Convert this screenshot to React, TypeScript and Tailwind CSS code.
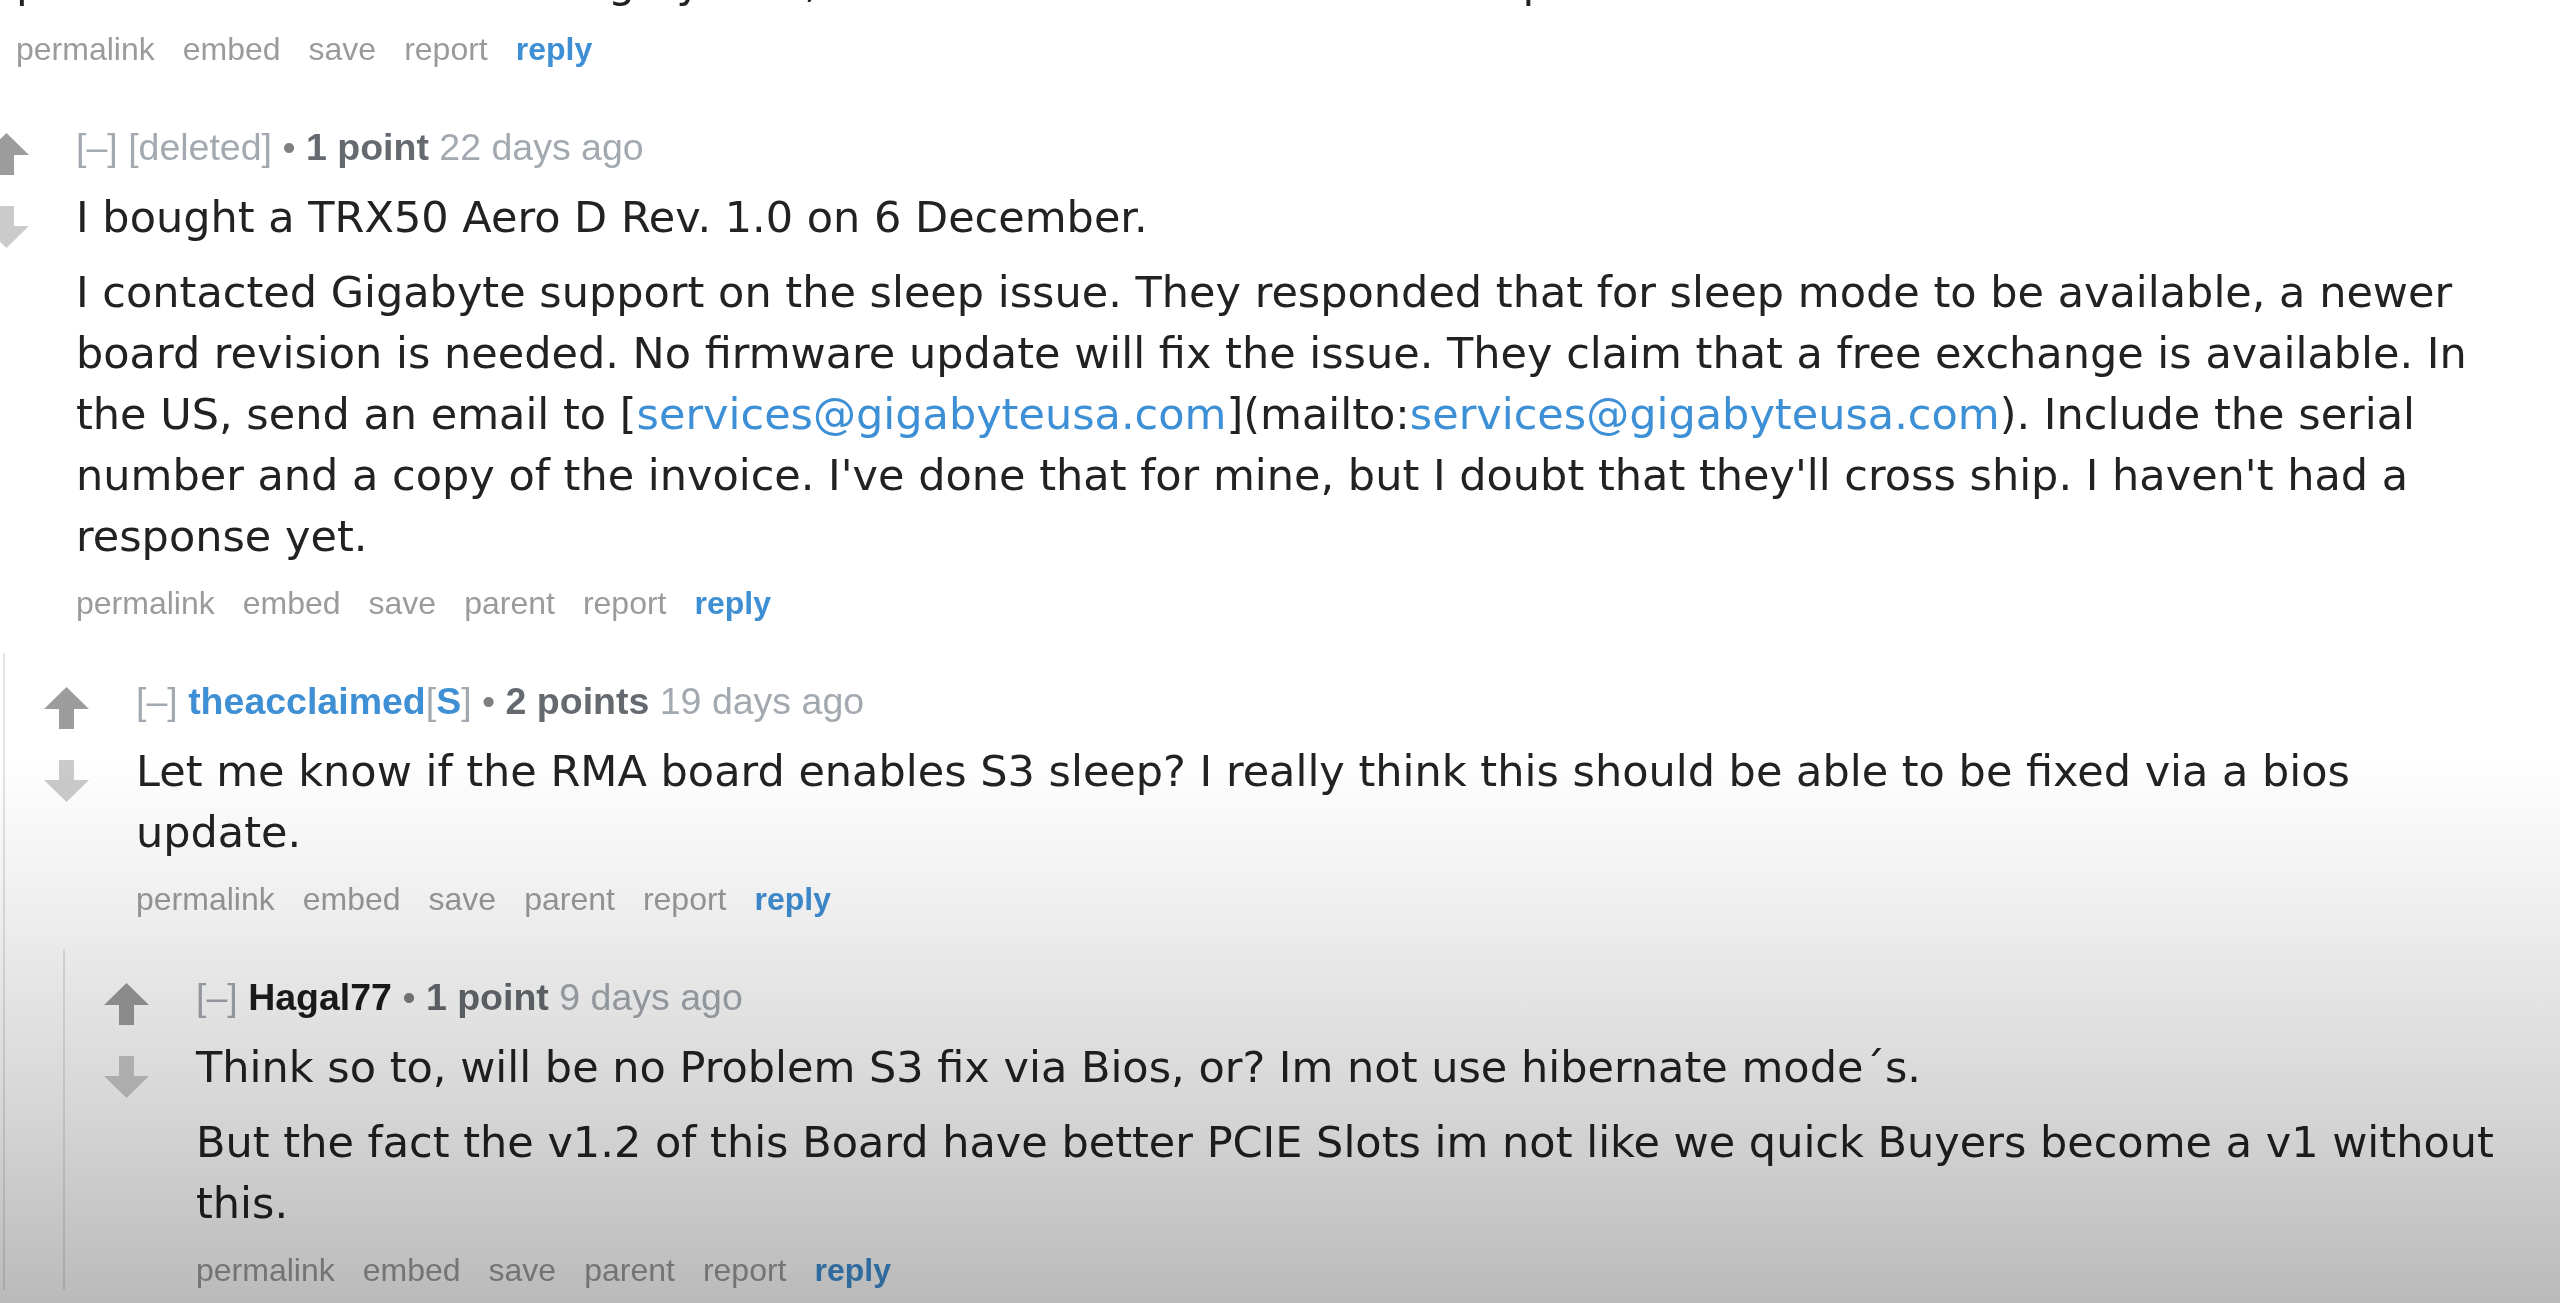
import React from "react";

type Para = React.ReactNode;

interface CommentData {
  author: React.ReactNode;
  points: string;
  age: string;
  body: Para[];
  parent?: boolean;
}

const metaFont = "font-['Liberation_Sans',Arial,sans-serif]";
const bodyFont = "font-['DejaVu_Sans','Verdana',sans-serif] text-[43px] leading-[61px] text-[#222]";

const Arrow = ({ down }: { down?: boolean }) => (
  <svg width="45" height="42" viewBox="0 0 45 42" className={down ? "rotate-180" : ""}>
    <path d="M22.5 0 L45 22 L30 22 L30 42 L15 42 L15 22 L0 22 Z" fill={down ? "#cbcbcb" : "#9c9c9c"} />
  </svg>
);

const Mail = ({ children }: { children: string }) => <span className="text-[#3d8fd6]">{children}</span>;

const Footer = ({ parent }: { parent?: boolean }) => (
  <ul className={`${metaFont} flex gap-[28px] text-[32px] leading-[40px] text-[#9b9b9b]`}>
    <li>permalink</li>
    <li>embed</li>
    <li>save</li>
    {parent && <li>parent</li>}
    <li>report</li>
    <li className="font-bold text-[#3f8fd4]">reply</li>
  </ul>
);

const Header = ({ c }: { c: CommentData }) => (
  <div className={`${metaFont} flex items-baseline whitespace-pre text-[37.5px] leading-[40px] text-[#a3a9b0]`}>
    <span>[–] </span>
    {c.author}
    <span className="text-[#7f7f7f]"> • </span>
    <span className="font-bold text-[#656a70]">{c.points}</span>
    <span> {c.age}</span>
  </div>
);

// each nesting level: 2px rule + 36px pad, so child row starts 60px right of parent row
const Children = ({ children }: { children: React.ReactNode }) => (
  <div className="mt-[30px] ml-[22px] border-l-2 border-[#e4e4e4] pl-[36px] pt-[28px]">{children}</div>
);

function Comment({ c, children }: { c: CommentData; children?: React.ReactNode }) {
  return (
    <div>
      <div className="flex">
        <div className="flex w-[50px] shrink-0 flex-col items-center gap-[31px] pt-[6px]">
          <Arrow />
          <Arrow down />
        </div>
        <div className="ml-[45px] min-w-0 flex-1 pr-[42px]">
          <Header c={c} />
          <div className={`${bodyFont} mt-[20px] flex flex-col gap-[14px]`}>
            {c.body.map((p, i) => (
              <p key={i}>{p}</p>
            ))}
          </div>
          <div className="mt-[16px]">
            <Footer parent={c.parent} />
          </div>
        </div>
      </div>
      {children && <Children>{children}</Children>}
    </div>
  );
}

const deleted: CommentData = {
  author: <span>[deleted]</span>,
  points: "1 point",
  age: "22 days ago",
  parent: true,
  body: [
    "I bought a TRX50 Aero D Rev. 1.0 on 6 December.",
    <>
      I contacted Gigabyte support on the sleep issue. They responded that for sleep mode to be available, a newer
      board revision is needed. No firmware update will fix the issue. They claim that a free exchange is available.
      In the US, send an email to [<Mail>services@gigabyteusa.com</Mail>](mailto:<Mail>services@gigabyteusa.com</Mail>).
      Include the serial number and a copy of the invoice. I've done that for mine, but I doubt that they'll cross
      ship. I haven't had a response yet.
    </>,
  ],
};

const op: CommentData = {
  author: (
    <span>
      <span className="font-bold text-[#3f8fd4]">theacclaimed</span>
      <span>[</span>
      <span className="font-bold text-[#3f8fd4]">S</span>
      <span>]</span>
    </span>
  ),
  points: "2 points",
  age: "19 days ago",
  parent: true,
  body: ["Let me know if the RMA board enables S3 sleep? I really think this should be able to be fixed via a bios update."],
};

const hagal: CommentData = {
  author: <span className="font-bold text-[#1c1c1c]">Hagal77</span>,
  points: "1 point",
  age: "9 days ago",
  parent: true,
  body: [
    "Think so to, will be no Problem S3 fix via Bios, or? Im not use hibernate mode´s.",
    "But the fact the v1.2 of this Board have better PCIE Slots im not like we quick Buyers become a v1 without this.",
  ],
};

export default function App() {
  return (
    <div className="relative h-[1303px] w-full overflow-hidden bg-white">
      <div className="-mt-[48px] -ml-[79px]">
        {/* parent comment, scrolled so only its last line and links show */}
        <div className="flex">
          <div className="w-[50px] shrink-0" />
          <div className="ml-[45px] min-w-0 flex-1 pr-[42px]">
            <p className={`${bodyFont} whitespace-nowrap`}>
              parts that should be working by now, and the new revision is the real problem.
            </p>
            <div className="mt-[16px]">
              <Footer />
            </div>
          </div>
        </div>
        <Children>
          <Comment c={deleted}>
            <Comment c={op}>
              <Comment c={hagal} />
            </Comment>
          </Comment>
        </Children>
      </div>
      <div className="pointer-events-none absolute inset-0 bg-[linear-gradient(to_bottom,#ffffff_0%,#ffffff_58%,#eeeeee_70%,#d6d6d6_85%,#bababa_100%)] mix-blend-multiply" />
    </div>
  );
}
